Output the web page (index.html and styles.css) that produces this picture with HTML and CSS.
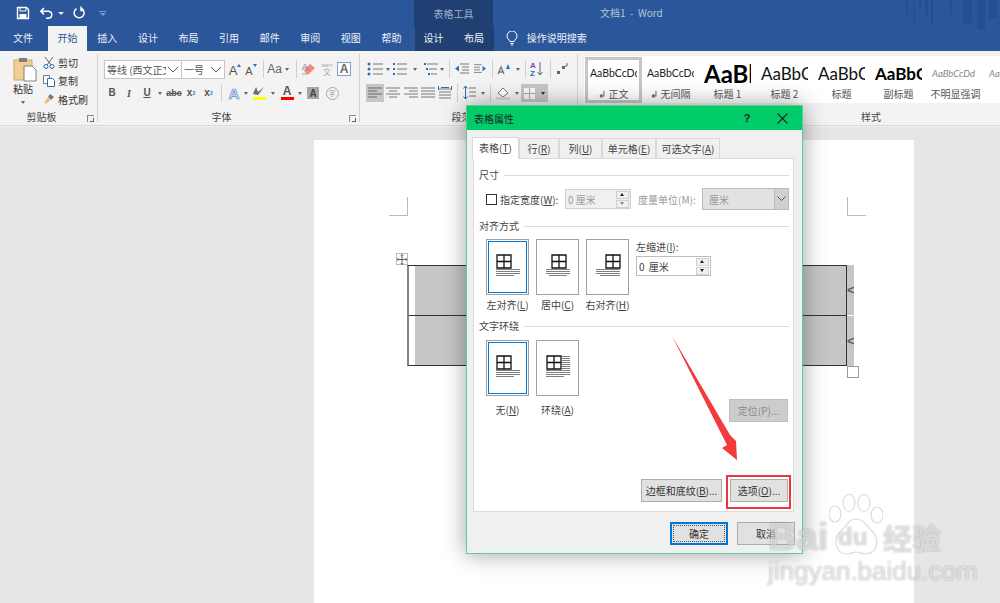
FILE: index.html
```html
<!DOCTYPE html>
<html lang="zh-CN">
<head>
<meta charset="utf-8">
<title>文档1 - Word</title>
<link rel="stylesheet" href="styles.css">
</head>
<body>
<div class="app">
  <header class="head">
    <div class="titlerow">
      <div class="qa">
        <svg class="qi" width="14" height="14" viewBox="0 0 14 14"><path d="M1.500 1.500h9l2 2v9h-11z" fill="none" stroke="#fff" stroke-width="1.400"/><path d="M4 1.500h6v3.500H4z" fill="none" stroke="#fff"/><rect x="3.500" y="8" width="7" height="4.500" fill="#fff"/></svg>
        <svg class="qi2" width="16" height="14" viewBox="0 0 16 14"><path d="M5 2L1.800 5.200 5 8.400M2 5.200h7c5 0 5 7 0 7H7" fill="none" stroke="#fff" stroke-width="1.500"/></svg>
        <span class="qc"></span>
        <svg class="qi3" width="13" height="14" viewBox="0 0 13 14"><path d="M8 2.200a5 5 0 1 1-4.500.4M8 .5v4h3" fill="none" stroke="#fff" stroke-width="1.500"/></svg>
        <span class="qm"></span>
      </div>
      <div class="tool tooltitle">表格工具</div>
      <div class="doctitle">文档1&nbsp; - &nbsp;Word</div>
      <svg class="deco" width="95" height="30" viewBox="0 0 95 30"><g fill="#24508f"><rect x="1" width="2" height="14"/><rect x="8" width="2" height="22"/><rect x="14" width="2" height="10"/><rect x="20" width="3" height="17"/><rect x="26" width="2" height="25"/><rect x="45" width="2" height="14"/><rect x="58" width="9" height="23"/><rect x="72" width="8" height="29"/><rect x="84" width="8" height="18"/></g></svg>
    </div>
    <nav class="tabrow">
      <span class="tab">文件</span><span class="tab on">开始</span><span class="tab">插入</span><span class="tab">设计</span><span class="tab">布局</span><span class="tab">引用</span><span class="tab">邮件</span><span class="tab">审阅</span><span class="tab">视图</span><span class="tab">帮助</span>
      <div class="tool toolrow"><span class="tab">设计</span><span class="tab">布局</span></div>
      <svg class="bulb" width="12" height="15" viewBox="0 0 12 15"><path d="M3.800 10.500C3.500 8.500 1 7.800 1 5a5 5 0 0 1 10 0c0 2.800-2.500 3.500-2.800 5.500zM4.500 12.500h3M5 14h2" fill="none" stroke="#fff"/></svg>
      <span class="search">操作说明搜索</span>
    </nav>
  </header>

  <section class="ribbon">
    <div class="grp g-clip">
      <div class="clip">
        <div class="paste">
          <svg width="24" height="25" viewBox="0 0 24 25"><rect x="1" y="3" width="18" height="20" fill="#f0cf92" stroke="#caa56a"/><rect x="6" y="1" width="8" height="4" fill="#7f7f7f"/><path d="M11 9h8l4 4v11H11z" fill="#fff" stroke="#808080"/></svg>
          <span>粘贴</span><i class="caret"></i>
        </div>
        <div class="cliplist">
          <div class="cl"><svg width="12" height="13" viewBox="0 0 12 13"><path d="M2 1l6 8M10 1L4 9" stroke="#666" fill="none"/><circle cx="3" cy="10.500" r="2" fill="none" stroke="#2b6fb3"/><circle cx="9" cy="10.500" r="2" fill="none" stroke="#2b6fb3"/></svg><span>剪切</span></div>
          <div class="cl"><svg width="12" height="12" viewBox="0 0 12 12"><path d="M.5.500h6v8h-6z" fill="#fff" stroke="#777"/><path d="M4.500 3.500h5l2 2v6h-7z" fill="#fff" stroke="#2b6fb3"/></svg><span>复制</span></div>
          <div class="cl"><svg width="12" height="12" viewBox="0 0 12 12"><path d="M7 1l4 3-3 3-3-3z" fill="#777"/><path d="M5 4.500L1 9l2 2 4.500-4z" fill="#f0c36d"/></svg><span>格式刷</span></div>
        </div>
      </div>
      <div class="glabel">剪贴板<i class="launch"></i></div>
    </div>

    <div class="grp g-font">
      <div class="rows">
        <div class="r1">
          <div class="combo w78"><span class="ct">等线 (西文正文)</span><svg class="chev" width="14" height="14" viewBox="0 0 14 14"><path d="M2 5l5 5 5-5" fill="none" stroke="#555"/></svg></div>
          <div class="combo w44"><span class="ct">一号</span><svg class="chev" width="14" height="14" viewBox="0 0 14 14"><path d="M2 5l5 5 5-5" fill="none" stroke="#555"/></svg></div>
          <span class="b w2"></span>
          <span class="b w16 ga">A<sup class="up"></sup></span>
          <span class="b w16 ga sm">A<sup class="dn"></sup></span>
          <span class="b w4"></span><i class="sep"></i>
          <span class="b w28 aa">Aa<i class="caret"></i></span>
          <span class="b w4"></span><i class="sep"></i>
          <span class="b w24"><svg width="16" height="14" viewBox="0 0 16 14"><path d="M3 8l6-6 5 4-6 6H5z" fill="#ef8a8a"/><path d="M1 12h6" stroke="#aaa"/><text x="1" y="8" font-size="9" fill="#777" font-family="Liberation Sans">A</text></svg></span>
          <span class="b w12 wen"><small>wén</small>文</span>
          <span class="b w22"><span class="abox">A</span></span>
        </div>
        <div class="r2">
          <span class="b w16 fb">B</span><span class="b w18 fi">I</span><span class="b w18 fu">U</span><span class="b w8"><i class="caret"></i></span>
          <span class="b w20 abc">abc</span><span class="b w14 fx">x<sub>2</sub></span><span class="b w21 fx">x<sup>2</sup></span>
          <span class="b w2"></span><i class="sep"></i><span class="b w3"></span>
          <span class="b w18 fa">A</span><span class="b w6"><i class="caret"></i></span>
          <span class="b w20"><span class="hl"><svg width="14" height="10" viewBox="0 0 14 10"><path d="M1 8l3-7 2 5 6-5-6 8z" fill="#6b6b6b"/></svg><i class="bar yel"></i></span></span><span class="b w8"><i class="caret"></i></span>
          <span class="b w20"><span class="hl txt">A<i class="bar red"></i></span></span><span class="b w6"><i class="caret"></i></span>
          <span class="b w20"><span class="agrey">A</span></span>
          <span class="b w18"><span class="ring">字</span></span>
        </div>
      </div>
      <div class="glabel">字体<i class="launch"></i></div>
    </div>

    <div class="grp g-para">
      <div class="rows">
        <div class="r1">
          <span class="b w18"><svg width="16" height="14" viewBox="0 0 16 14"><g fill="#2b6fb3"><circle cx="2" cy="2" r="1.500"/><circle cx="2" cy="7" r="1.500"/><circle cx="2" cy="12" r="1.500"/></g><path d="M6 2h10M6 7h10M6 12h10" stroke="#777"/></svg></span><span class="b w8"><i class="caret"></i></span>
          <span class="b w16"><svg width="14" height="14" viewBox="0 0 14 14"><g fill="#2b6fb3"><rect x="0" y="1" width="2" height="2"/><rect x="0" y="6" width="2" height="2"/><rect x="0" y="11" width="2" height="2"/></g><path d="M4 2h10M4 7h10M4 12h10" stroke="#777"/></svg></span><span class="b w14"><i class="caret"></i></span><span class="b w1"></span>
          <span class="b w16"><svg width="14" height="14" viewBox="0 0 14 14"><path d="M3 2h11M5 7h8M7 12h6" stroke="#777"/><g fill="#2b6fb3"><rect y="1" width="2" height="2"/><rect x="2" y="6" width="2" height="2"/><rect x="4" y="11" width="2" height="2"/></g></svg></span><span class="b w5"><i class="caret"></i></span><span class="b w5"></span><i class="sep"></i>
          <span class="b w24"><svg width="14" height="12" viewBox="0 0 14 12"><path d="M5 1h9M7 4h7M7 7h7M5 10h9" stroke="#777"/><path d="M0 5.500l4-3v6z" fill="#2b6fb3"/></svg></span>
          <span class="b w12"><svg width="14" height="12" viewBox="0 0 14 12"><path d="M0 1h9M0 4h7M0 7h7M0 10h9" stroke="#777"/><path d="M14 5.500l-4-3v6z" fill="#2b6fb3"/></svg></span><span class="b w6"></span><i class="sep"></i>
          <span class="b w22"><svg width="14" height="14" viewBox="0 0 14 14"><path d="M1 12l3-7 3 7M2 10h4" fill="none" stroke="#777" stroke-width="1.300"/><path d="M9 7l2-5 2 5z" fill="#2b6fb3"/></svg></span><span class="b w6"><i class="caret"></i></span><span class="b w4"></span><i class="sep"></i>
          <span class="b w22"><svg width="14" height="16" viewBox="0 0 14 16"><text x="0" y="7" font-size="8" fill="#7a4fb5" font-family="Liberation Sans" font-weight="700">A</text><text x="0" y="15" font-size="8" fill="#2b6fb3" font-family="Liberation Sans" font-weight="700">Z</text><path d="M10 1v13M7.500 11l2.500 3 2.500-3" fill="none" stroke="#666"/></svg></span><span class="b w2"></span><i class="sep"></i>
          <span class="b w22"><svg width="12" height="12" viewBox="0 0 12 12"><path d="M1 8h3v3H1zM6 3h3v3H6z" fill="#666"/><path d="M11 0v3H9" fill="none" stroke="#666"/></svg></span>
        </div>
        <div class="r2">
          <span class="b w18 act"><svg width="14" height="12" viewBox="0 0 14 12"><path d="M0 1h14M0 4h9M0 7h14M0 10h9" stroke="#666"/></svg></span>
          <span class="b w18"><svg width="14" height="12" viewBox="0 0 14 12"><path d="M0 1h14M3 4h8M0 7h14M3 10h8" stroke="#777"/></svg></span>
          <span class="b w17"><svg width="14" height="12" viewBox="0 0 14 12"><path d="M0 1h14M5 4h9M0 7h14M5 10h9" stroke="#777"/></svg></span>
          <span class="b w18"><svg width="14" height="12" viewBox="0 0 14 12"><path d="M0 1h14M0 4h14M0 7h14M0 10h14" stroke="#777"/></svg></span>
          <span class="b w16"><svg width="14" height="14" viewBox="0 0 14 14"><path d="M1 3h12M1 6h12M1 9h12M1 12h12" stroke="#777"/><path d="M.5 0v4M13.500 0v4M3 1.500h8" stroke="#2b6fb3"/></svg></span>
          <span class="b w4"></span><i class="sep"></i>
          <span class="b w22"><svg width="13" height="16" viewBox="0 0 13 16"><path d="M6 3h7M6 7h7M6 11h7" stroke="#777"/><path d="M2.500 1v13M.5 3.500l2-2.500 2 2.500M.5 11.500l2 2.500 2-2.500" fill="none" stroke="#2b6fb3"/></svg></span><span class="b w6"><i class="caret"></i></span><span class="b w4"></span><i class="sep"></i>
          <span class="b w2"></span>
          <span class="b w20"><svg width="14" height="14" viewBox="0 0 14 14"><path d="M2 7l5-5 5 5-5 4z" fill="#fff" stroke="#777"/><rect y="11" width="14" height="3" fill="#d9d9d9"/></svg></span><span class="b w8"><i class="caret"></i></span>
          <span class="b w27 act"><svg width="11" height="11" viewBox="0 0 11 11"><rect width="11" height="11" fill="#f7f7f7"/><path d="M5.500 0v11M0 5.500h11" stroke="#a8a8a8"/></svg><i class="caret dk"></i></span>
        </div>
      </div>
      <div class="glabel">段落</div>
    </div>

    <div class="grp g-style">
      <div class="gallery">
        <div class="st sel"><span class="pv">AaBbCcDd</span><span class="sl">↲ 正文</span></div>
        <div class="st"><span class="pv">AaBbCcDd</span><span class="sl">↲ 无间隔</span></div>
        <div class="st"><span class="pv h1">AaBl</span><span class="sl">标题 1</span></div>
        <div class="st"><span class="pv h2">AaBbC</span><span class="sl">标题 2</span></div>
        <div class="st"><span class="pv h2">AaBbC</span><span class="sl">标题</span></div>
        <div class="st"><span class="pv h3">AaBbC</span><span class="sl">副标题</span></div>
        <div class="st"><span class="pv em">AaBbCcDd</span><span class="sl">不明显强调</span></div>
        <div class="st"><span class="pv em">AaBbCcDd</span><span class="sl"></span></div>
      </div>
      <div class="glabel">样式</div>
    </div>
  </section>

  <main class="canvas">
    <div class="page">
      <i class="crop cl-l"></i><i class="crop cl-r"></i>
      <div class="move"><svg width="11" height="11" viewBox="0 0 11 11"><path d="M5.500 0v11M0 5.500h11M4 1.500L5.500 0 7 1.500M4 9.500L5.500 11 7 9.500M1.500 4L0 5.500 1.500 7M9.500 4L11 5.500 9.500 7" fill="none" stroke="#555"/></svg></div>
      <div class="doctable">
        <div class="tbl">
          <div class="trow"><i class="gap"></i><i class="fill"></i></div>
          <div class="trow"><i class="gap"></i><i class="fill"></i></div>
        </div>
        <div class="ends"><span class="endm">&lt;</span><span class="endm">&lt;</span></div>
      </div>
      <i class="resize"></i>
    </div>
  </main>

  <div class="dialog">
    <div class="dtitle"><span class="dt">表格属性</span><span class="dq">?</span><svg class="dx" width="11" height="11" viewBox="0 0 11 11"><path d="M.5.500l10 10M10.500.500l-10 10" stroke="#222" stroke-width="1.100"/></svg></div>
    <div class="dtabs">
      <span class="dtab act1 w46">表格(<u>T</u>)</span><span class="dtab w40">行(<u>R</u>)</span><span class="dtab w43">列(<u>U</u>)</span><span class="dtab w54">单元格(<u>E</u>)</span><span class="dtab w64">可选文字(<u>A</u>)</span>
    </div>
    <div class="panel">
      <div class="legend">尺寸</div>
      <div class="sizerow">
        <i class="check"></i><span class="lab">指定宽度(<u>W</u>):</span>
        <div class="spin dis w66"><span>0 厘米</span><div class="arrows"><i class="au dark"></i><i class="ad"></i></div></div>
        <span class="lab mute">度量单位(M):</span>
        <div class="dsel"><span>厘米</span><div class="dd"><svg width="9" height="6" viewBox="0 0 9 6"><path d="M.5.500l4 4 4-4" fill="none" stroke="#555"/></svg></div></div>
      </div>
      <div class="legend l2">对齐方式</div>
      <div class="alignrow">
        <div class="opt"><div class="box sel"><svg width="41" height="54" viewBox="0 0 41 54"><use href="#tb" x="9"/><path d="M9 29.500h24M9 31.500h24M9 33.500h24M9 35.500h18" stroke="#808080"/></svg></div><span>左对齐(<u>L</u>)</span></div>
        <div class="opt"><div class="box"><svg width="41" height="54" viewBox="0 0 41 54"><use href="#tb" x="14"/><path d="M9 29.500h24M9 31.500h24M9 33.500h24M12 35.500h18" stroke="#808080"/></svg></div><span>居中(<u>C</u>)</span></div>
        <div class="opt"><div class="box"><svg width="41" height="54" viewBox="0 0 41 54"><use href="#tb" x="18"/><path d="M9 29.500h24M9 31.500h24M9 33.500h24M13 35.500h20" stroke="#808080"/></svg></div><span>右对齐(<u>H</u>)</span></div>
        <div class="indent"><span>左缩进(<u>I</u>):</span><div class="spin w75"><span>0 厘米</span><div class="arrows"><i class="au dark"></i><i class="ad dark"></i></div></div></div>
      </div>
      <div class="legend l3">文字环绕</div>
      <div class="wraprow">
        <div class="opt o2"><div class="box sel"><svg width="41" height="54" viewBox="0 0 41 54"><use href="#tb" x="9"/><path d="M9 29.500h24M9 31.500h24M9 33.500h24M9 35.500h18" stroke="#808080"/></svg></div><span>无(<u>N</u>)</span></div>
        <div class="opt o2"><div class="box"><svg width="41" height="54" viewBox="0 0 41 54"><use href="#tb" x="9"/><path d="M25 15.500h8M25 17.500h8M25 19.500h8M25 21.500h8M25 23.500h8M25 25.500h8M25 27.500h8M9 29.500h24M9 31.500h24M9 33.500h24M9 35.500h18" stroke="#808080"/></svg></div><span>环绕(<u>A</u>)</span></div>
        <span class="btn dis pos">定位(P)...</span>
      </div>
      <div class="pbtns"><span class="btn w81">边框和底纹(<u>B</u>)...</span><span class="btn w58">选项(<u>O</u>)...</span></div>
    </div>
    <div class="dfoot"><span class="btn w58 def"><b>确定</b></span><span class="btn w58">取消</span></div>
    <svg class="defs" width="0" height="0"><defs><g id="tb"><path d="M1 15h14v13H1zM8 15v13M1 21.500h14" fill="#fff" stroke="#111" stroke-width="1.300"/></g></defs></svg>
  </div>

  <svg class="arrow" width="80" height="135" viewBox="0 0 80 135"><path d="M1 1L59 100 65 106 66 125 51 113 56 110z" fill="#f23b3b"/></svg>
  <i class="redbox"></i>

  <div class="wm">
    <span class="wm1">Bai</span>
    <svg class="paw" width="54" height="62" viewBox="0 0 54 62"><g fill="rgba(255,255,255,.55)" stroke="#dcdcdc" stroke-width="1.200"><ellipse cx="6" cy="20" rx="6" ry="8"/><ellipse cx="20" cy="9" rx="6" ry="8.500"/><ellipse cx="35" cy="9" rx="6" ry="8.500"/><ellipse cx="48" cy="21" rx="6" ry="8"/><path d="M27 25c-8 0-8 6-15 12-8 7-7 22 6 23 4 0 6-2 9-2s6 2 10 2c12-1 14-15 6-23-7-6-8-12-16-12z"/></g></svg>
    <span class="wm-du">du</span>
    <span class="wm2">经验</span>
    <span class="wm3">jingyan.baidu.com</span>
  </div>
</div>
</body>
</html>
```
FILE: styles.css
```css
*{box-sizing:border-box}
html,body{margin:0;height:100%;overflow:hidden}
body{font-family:"Noto Sans CJK SC","Liberation Sans",sans-serif;font-size:10px;color:#333}
i{display:block;font-style:normal}
.app{position:relative;width:1000px;height:603px;overflow:hidden;display:flex;flex-direction:column;background:#e6e6e6}
.head{background:#2b579a;color:#fff}
.titlerow{display:flex;height:26px;position:relative}
.qa{width:414px;display:flex;align-items:center;padding-left:16px}
.qi2{margin-left:9px}.qi3{margin-left:9px}
.qc{width:0;height:0;border:3px solid transparent;border-top-color:#e8edf5;border-bottom:0;margin-left:3px}
.qm{width:7px;height:4px;margin-left:13px;border-top:1px solid #7f9bc4;border-bottom:0;position:relative}
.qm:after{content:"";display:block;width:0;height:0;border:3px solid transparent;border-top-color:#7f9bc4;border-bottom:0;margin:1px 0 0 1px}
.tool{background:#203f72;width:79px}
.tooltitle{display:flex;align-items:center;justify-content:center;color:#9fb0ca;font-size:10px}
.doctitle{margin-left:107px;line-height:26px;color:#b5c3d9;font-size:10px}
.deco{position:absolute;right:0;top:0}
.tabrow{display:flex;height:25px;align-items:stretch}
.tab{width:40.6px;text-align:center;line-height:24px;font-size:10px;color:#eef2f8}
.tab:first-child{width:48px;padding-right:2px}
.tab.on{background:#f3f3f3;color:#2b579a;width:39px}
.toolrow{display:flex;margin-left:3px;width:79px}
.toolrow .tab{width:39.500px}
.bulb{margin:5px 0 0 12px}
.search{margin-left:9px;line-height:24px;color:#eef2f8}
.ribbon{height:75px;background:#f3f3f3;border-bottom:1px solid #dadada;display:flex;flex:none;box-shadow:0 1px 0 #efefef}
.grp{position:relative;border-right:1px solid #d4d4d4;margin:3px 0 2px;height:68px;flex:none}
.g-clip{width:98px}
.g-font{width:262px;padding:5px 0 0 6px}
.g-para{width:218px;padding:5px 0 0 6px}
.g-style{flex:1 1 0;min-width:0;border:0;padding:1px 0 0 6px;overflow:hidden}
.glabel{position:absolute;left:0;right:0;bottom:-2px;height:14px;line-height:14px;padding-right:14px;text-align:center;color:#444;font-size:10px}
.g-style{height:70px}
.g-style .glabel{left:280px;right:auto;width:26px;padding:0;bottom:0}
.launch{position:absolute;right:3px;bottom:2px;width:7px;height:7px;border-left:1px solid #888;border-top:1px solid #888}
.launch:after{content:"";display:block;width:3px;height:3px;margin:2px 0 0 2px;border-right:1px solid #666;border-bottom:1px solid #666}
.clip{display:flex;padding:3px 0 0 13px}
.paste{width:24px;display:flex;flex-direction:column;align-items:flex-start;font-size:10px;color:#333}
.paste span{margin-top:0;line-height:14px;white-space:nowrap}
.paste .caret{margin:5px 0 0 8px}
.cliplist{margin:-4px 0 0 6px;display:flex;flex-direction:column}
.cl{display:flex;align-items:center;height:18.500px;gap:3px;white-space:nowrap}
.rows{display:flex;flex-direction:column;gap:5px}
.r1{display:flex;height:20px;align-items:center}
.r2{display:flex;height:18px;align-items:center}
.b{display:flex;align-items:center;justify-content:center;flex:none;height:100%;color:#555;line-height:1;font-family:"Liberation Sans",sans-serif}
.w1{width:1px}.w2{width:2px}.w3{width:3px}.w4{width:4px}.w5{width:5px}.w6{width:6px}.w8{width:8px}.w12{width:12px}.w14{width:14px}.w16{width:16px}.w17{width:17px}.w18{width:18px}.w20{width:20px}.w21{width:21px}.w22{width:22px}.w24{width:24px}.w27{width:27px}.w28{width:28px}
.sep{width:1px;height:18px;background:#cfcfcf;flex:none}
.caret{width:0;height:0;border:2.500px solid transparent;border-top:3px solid #666;border-bottom:0;flex:none}
.caret.dk{margin-left:6px;border-top-color:#333}
.combo{display:flex;align-items:center;height:19px;background:#fff;border:1px solid #c6c6c6;flex:none;overflow:hidden;position:relative}
.w78{width:78px}.w44{width:44px;margin-left:-1px}
.ct{padding-left:2px;white-space:nowrap;overflow:hidden;flex:1;color:#555;font-size:10px}
.chev{flex:none;margin-right:1px}
.ga{font-size:13px;align-items:flex-end;padding-bottom:2px;position:relative}
.ga.sm{font-size:11px}
.up,.dn{width:0;height:0;border:2px solid transparent;margin:0 0 10px 0}
.up{border-bottom:3px solid #2b6fb3;border-top:0}
.dn{border-top:3px solid #2b6fb3;border-bottom:0}
.aa{font-size:12px;gap:3px;color:#666}
.wen{flex-direction:column;font:8px/8px "Noto Sans CJK SC",sans-serif;color:#aaa}
.wen small{font-size:6px;line-height:6px;font-family:"Liberation Sans",sans-serif}
.abox{width:14px;height:14px;border:1px solid #7ba1c8;display:flex;align-items:center;justify-content:center;font:700 12px "Liberation Sans",sans-serif;color:#666;background:#fff}
.fb{font-weight:700;font-size:10px}.fi{font:italic 700 10px "Liberation Serif",serif}
.fu{font-size:10px;font-weight:700;text-decoration:underline}
.abc{font-size:9px;font-weight:700;text-decoration:line-through;text-decoration-thickness:1px}
.fx{font-size:10px;font-weight:700}.fx sub,.fx sup{font-size:5px;color:#2b6fb3;line-height:0}
.fa{font:700 15px "Liberation Sans",sans-serif;color:#cfe0f2;-webkit-text-stroke:.7px #5b8fc7}
.hl{display:flex;flex-direction:column;align-items:center;width:13px}
.hl.txt{font:700 12px/10px "Liberation Sans",sans-serif;color:#555}
.bar{width:13px;height:3px;margin-top:1px}
.yel{background:#ffff00}.red{background:#ff0000}
.agrey{width:12px;height:12px;background:#a6a6a6;color:#444;display:flex;align-items:center;justify-content:center;font:700 10px "Liberation Sans",sans-serif}
.ring{width:13px;height:13px;border:1px solid #aaa;border-radius:50%;color:#999;font:7px/11px "Noto Sans CJK SC",sans-serif;text-align:center}
.act{background:#c6c6c6}
.gallery{display:flex;height:48px;background:#fff;padding-left:1px;overflow:hidden;border-top:1px solid #f0f0f0}
.st{width:57px;flex:none;height:46px;padding:0 2px;margin-top:1px;display:flex;flex-direction:column;align-items:center;overflow:hidden;border:3px solid transparent}
.st.sel{border-color:#c6c6c6}
.pv{height:27px;width:100%;overflow:hidden;white-space:nowrap;font:10.500px/27px Lato,"Liberation Sans",sans-serif;color:#222}
.pv.h1{font:700 24px/27px Lato,"Liberation Sans",sans-serif;color:#000}
.pv.h2{font:17px/27px Lato,"Liberation Sans",sans-serif;color:#111}
.pv.h3{font:700 17px/27px Lato,"Liberation Sans",sans-serif;color:#000}
.pv.em{font:italic 9.500px/27px Lato,"Liberation Sans",sans-serif;color:#888}
.sl{font-size:10px;line-height:13px;color:#555;white-space:nowrap}
.canvas{flex:1;min-height:0;display:flex;padding:14px 86px 0 314px}
.page{position:relative;width:600px;background:#fff;padding:125px 0 0 93px}
.crop{position:absolute;top:57px;width:19px;height:19px}
.cl-l{left:75px;border-right:1px solid #b9b9b9;border-bottom:1px solid #b9b9b9}
.cl-r{left:533px;border-left:1px solid #b9b9b9;border-bottom:1px solid #b9b9b9}
.move{position:absolute;left:82px;top:113px;width:12px;height:12px;border:1px solid #bbb;background:#fff;display:flex;align-items:center;justify-content:center;padding:0}
.doctable{display:flex;width:447px}
.tbl{width:440px;height:101px;border-left:2px solid #848484;border-right:1px solid #333;border-top:1px solid #333;border-bottom:1px solid #333;background:#c6c6c6}
.trow{display:flex;height:49px}
.trow+.trow{border-top:1px solid #333;height:50px}
.gap{width:6px;background:#fff}.fill{flex:1}
.ends{width:7px;display:flex;flex-direction:column;gap:1px;background:#fff}
.endm{height:50px;background:#c6c6c6;color:#666;font:700 15px/50px "Liberation Sans",sans-serif;overflow:hidden}
.resize{position:absolute;left:533px;top:226px;width:12px;height:12px;border:1px solid #999;background:#fff}
.dialog{position:absolute;left:466px;top:105px;width:337px;height:449px;background:#f0f0f0;border:1px solid #58cf92;box-shadow:0 0 22px rgba(0,0,0,.38);display:flex;flex-direction:column;font-size:10px;color:#444}
.dtitle{height:24px;flex:none;background:#00cc6a;display:flex;align-items:center;padding-left:7px;color:#222}
.dt{flex:1}
.dq{width:10px;text-align:center;font:700 11px "Liberation Sans",sans-serif;margin-right:25px}
.dx{margin-right:14px}
.dtabs{display:flex;align-items:flex-end;height:28px;flex:none;padding-left:5px;position:relative;z-index:1}
.dtab{height:20px;line-height:19px;text-align:center;background:#f0f0f0;border:1px solid #d9d9d9;border-bottom:0;margin-right:0;white-space:nowrap}
.dtab.act1{height:22px;background:#fff;line-height:20px;margin-bottom:-1px}
.w46{width:47px}.w40{width:40px}.w43{width:43px}.w54{width:54px}.w64{width:64px}
.dtab u,.lab u,.opt u,.btn u,.indent u{text-underline-offset:1px}
.panel{margin-left:6px;width:321px;height:354px;flex:none;background:#fff;border:1px solid #dcdcdc;padding:9px 4px 9px 5px;display:flex;flex-direction:column}
.legend{display:flex;align-items:center;gap:5px;height:14px;line-height:14px;flex:none;color:#444}
.legend:after{content:"";flex:1;height:1px;background:#dcdcdc}
.sizerow{display:flex;align-items:center;height:22px;margin-top:6px;padding-left:7px;flex:none}
.check{width:11px;height:11px;border:1px solid #333;background:#fff;flex:none}
.lab{margin-left:3px;white-space:nowrap;width:62px}
.lab.mute{color:#9a9a9a;margin-left:7px;width:64px}
.spin{display:flex;align-items:center;height:20px;border:1px solid #bdbdbd;padding-left:2px;background:#fff;justify-content:space-between;flex:none;font-size:10px}
.spin.dis{background:#f0f0f0;color:#9c9c9c;border-color:#d0d0d0}
.w66{width:66px;margin-left:3px}.w75{width:75px;word-spacing:2px}
.arrows{display:flex;flex-direction:column;gap:1px;width:13px;margin-right:1px}
.au,.ad{height:8px;background:#f0f0f0;border:1px solid #d0d0d0;position:relative}
.au:after,.ad:after{content:"";position:absolute;left:3px;top:1px;width:0;height:0;border:2.500px solid transparent}
.au:after{border-top:0;border-bottom:3px solid #888}
.ad:after{border-bottom:0;border-top:3px solid #888}
.au.dark:after{border-bottom-color:#222}.ad.dark:after{border-top-color:#222}
.dsel{display:flex;width:87px;height:22px;margin-left:0;background:#e2e2e2;border:1px solid #bcbcbc;align-items:center;padding-left:6px;flex:none;color:#999}
.dsel span{flex:1}
.dd{width:14px;height:20px;background:#d0d0d0;border-left:1px solid #bcbcbc;display:flex;align-items:center;justify-content:center}
.l2{margin-top:9px}
.alignrow{display:flex;gap:7px;margin-top:6px;padding-left:7px;flex:none}
.opt{width:43px;display:flex;flex-direction:column;align-items:center;gap:3px;white-space:nowrap}
.opt>span{line-height:14px;height:14px}
.box{width:43px;height:56px;border:1px solid #a0a0a0;background:#fff;position:relative;overflow:hidden}
.box.sel:before{content:"";position:absolute;inset:1px;border:1px solid #0078d7}
.box svg{display:block}
.indent{margin-left:0;display:flex;flex-direction:column;padding-top:1px}
.indent>span{line-height:14px;margin-bottom:2px}
.l3{margin-top:7px}
.wraprow{display:flex;gap:7px;margin-top:7px;padding-left:7px;flex:none}
.o2{gap:7px}
.btn{display:flex;align-items:center;justify-content:center;height:23px;background:#e1e1e1;border:1px solid #adadad;color:#333;white-space:nowrap;flex:none}
.btn.dis{background:#ccc;border-color:#bfbfbf;color:#8a8a8a}
.pos{width:59px;margin:59px 1px 0 auto}
.pbtns{display:flex;gap:8px;justify-content:flex-end;margin-top:auto;padding-right:1px}
.w81{width:81px}.w58{width:58px}
.dfoot{display:flex;gap:9px;justify-content:flex-end;margin-top:10px;padding-right:7px}
.def{border:2px solid #0078d7;outline:1px dotted #555;outline-offset:-4px}
.def b{font-weight:400}
.defs{position:absolute}
.arrow{position:absolute;left:671px;top:335px}
.redbox{position:absolute;left:726px;top:475px;width:65px;height:34px;border:2px solid #f0343c}
.wm{position:absolute;left:765px;top:492px;width:185px;height:95px;color:rgba(255,255,255,.55);text-shadow:0 0 2px rgba(0,0,0,.3);font-family:"Liberation Sans",sans-serif;pointer-events:none}
.wm span{position:absolute;white-space:nowrap;line-height:1}
.wm1{left:3px;top:25px;font-size:39px;font-weight:700}
.paw{position:absolute;left:64px;top:2px}
.wm-du{left:73px;top:33px;font-size:24px;font-weight:700}
.wm2{left:118px;top:31px;font:700 29px/1 "Noto Sans CJK SC",sans-serif}
.wm3{left:3px;top:66px;font-size:26px}
```
